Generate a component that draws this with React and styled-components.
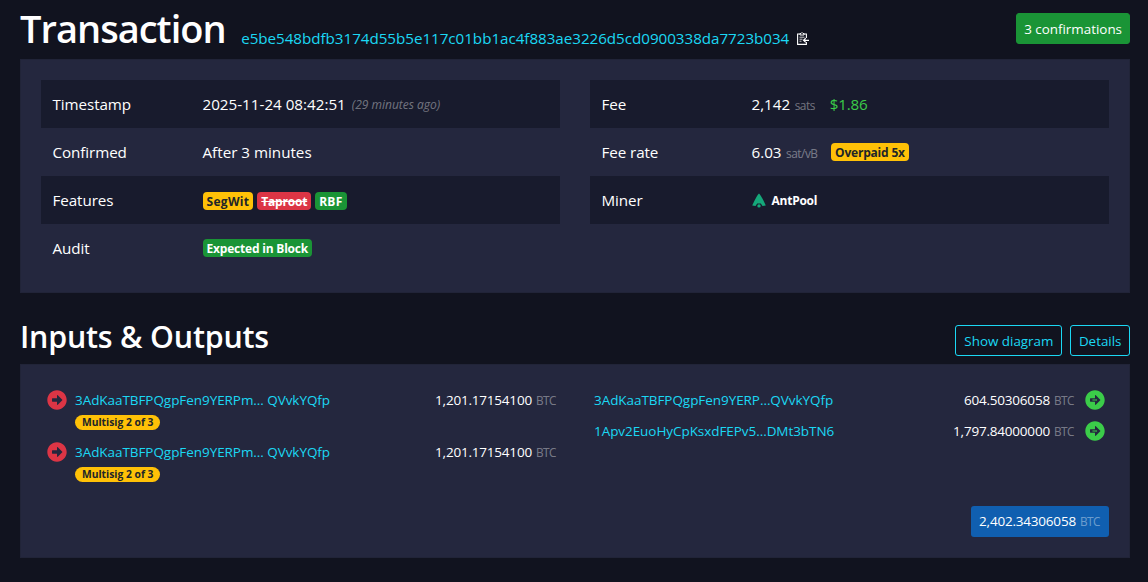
import React from "react";
import styled, { createGlobalStyle } from "styled-components";

const GlobalStyle = createGlobalStyle`
  * {
    box-sizing: border-box;
  }

  body {
    margin: 0;
    height: 582px;
    overflow: hidden;
    background: #11131f;
    color: #fff;
    font-family: "Open Sans", "Noto Sans", sans-serif;
    font-size: 15.2px;
    line-height: 24px;
  }
`;

const Page = styled.div`
  padding: 0 18px 0 20px;
  white-space: nowrap;
`;

const Header = styled.div`
  display: flex;
  align-items: flex-start;
  height: 59px;
`;

const Title = styled.h1`
  margin: 4px 0 0;
  font-size: 38px;
  font-weight: 600;
  line-height: 48px;
  letter-spacing: -0.98px;
`;

const Subtitle = styled.h2`
  margin: 25px auto 0 0;
  font-size: 30.4px;
  font-weight: 600;
  line-height: 38px;
  letter-spacing: -0.2px;
`;

const TxId = styled.a`
  margin: 26px auto 0 15.5px;
  display: flex;
  align-items: center;
  gap: 8px;
  color: #1bd8f4;
  letter-spacing: -0.035px;
`;

const Button = styled.button`
  height: 31px;
  margin: ${({ $top }) => $top}px 0 0 8px;
  padding: 1px ${({ $pad = 7.5 }) => $pad}px 0;
  border: 1px solid ${({ $border }) => $border};
  border-radius: 3px;
  background: ${({ $fill }) => $fill || "transparent"};
  color: ${({ $color }) => $color || "#fff"};
  font-family: inherit;
  font-size: 13.4px;
  line-height: 21px;
  white-space: nowrap;
`;

const Box = styled.div`
  display: flex;
  height: ${({ $height }) => $height}px;
  padding: 20px;
  border: 1px solid #212438;
  background: #24273e;
`;

const Summary = styled(Box)`
  gap: 30px;
`;

const Table = styled.div`
  flex: 1;
`;

const Row = styled.div`
  display: flex;
  align-items: center;
  height: 48px;
  padding: 0 11.5px;

  &:nth-child(odd) {
    background: #181b2d;
  }
`;

const Label = styled.div`
  width: 150px;
  letter-spacing: -0.08px;
`;

const Value = styled.div`
  display: flex;
  align-items: center;
`;

const Muted = styled.span`
  margin-left: ${({ $italic }) => ($italic ? 6 : 4.5)}px;
  padding-top: 2px;
  color: rgba(255, 255, 255, 0.4);
  font-size: ${({ $italic }) => ($italic ? 12 : 11.9)}px;
  font-style: ${({ $italic }) => ($italic ? "italic" : "normal")};
  letter-spacing: ${({ $italic }) => ($italic ? 0 : -0.5)}px;
`;

const Fiat = styled.span`
  margin-left: 15px;
  color: #3bcc49;
  letter-spacing: -0.2px;
`;

const badgeColors = {
  warning: ["#ffc107", "#212529"],
  danger: ["#dc3545", "#fff"],
  success: ["#1a9436", "#fff"],
};

const Badge = styled.span`
  height: 18px;
  margin: ${({ $top = 1 }) => $top}px 4px 0 0;
  padding: 0 4px;
  border-radius: 4px;
  background: ${({ $type }) => badgeColors[$type][0]};
  color: ${({ $type }) => badgeColors[$type][1]};
  font-size: 12px;
  font-weight: 700;
  line-height: 19px;
  letter-spacing: ${({ $spacing = -0.2 }) => $spacing}px;
  text-decoration: ${({ $struck }) => ($struck ? "line-through" : "none")};
`;

const FeeBadge = styled(Badge)`
  margin: 0 0 0 13.5px;
`;

const Miner = styled.span`
  margin-left: 6px;
  padding-top: 2px;
  font-size: 12px;
  font-weight: 700;
  letter-spacing: -0.25px;
`;

const SectionHeader = styled.div`
  display: flex;
  align-items: flex-start;
  height: 71px;
`;

const Transfers = styled(Box)`
  flex-direction: column;
  justify-content: space-between;
  font-size: 13.5px;
  line-height: 23px;
`;

const Columns = styled.div`
  display: flex;
  gap: 38px;
  padding: 4px 4px 0 6px;
`;

const InputList = styled.div`
  display: flex;
  flex-direction: column;
  gap: 9px;
  width: 509px;
`;

const OutputList = styled.div`
  display: flex;
  flex-direction: column;
  gap: 8px;
  flex: 1;
`;

const Entry = styled.div`
  display: flex;
  align-items: flex-start;
`;

const Party = styled.div`
  display: flex;
  flex-direction: column;
  align-items: flex-start;
  flex: 1;
`;

const Address = styled.a`
  height: 23px;
  color: #1bd8f4;
  letter-spacing: -0.06px;
`;

const Pill = styled.span`
  height: 15px;
  margin-top: 3px;
  margin-bottom: 2px;
  padding: 0 7px;
  border-radius: 8px;
  background: #ffc107;
  color: #212529;
  font-size: 10.3px;
  font-weight: 700;
  line-height: 15px;
`;

const Amount = styled.div`
  display: flex;
  letter-spacing: -0.2px;
`;

const Unit = styled.span`
  margin-left: 4px;
  color: rgba(255, 255, 255, 0.4);
  font-size: 11.8px;
  letter-spacing: -0.5px;
`;

const ArrowSvg = styled.svg`
  flex: none;
  width: 20px;
  height: 20px;
  margin: ${({ $margin }) => $margin};
`;

const Total = styled.div`
  display: flex;
  align-items: center;
  align-self: flex-end;
  height: 31px;
  padding: 0 9px 0 8px;
  border-radius: 3px;
  background: #105fb0;
  letter-spacing: -0.2px;
`;

const Arrow = ({ color, margin, hollow }) => (
  <ArrowSvg $margin={margin} viewBox="0 0 512 512" fill={color}>
    <path d="M256 8c137 0 248 111 248 248S393 504 256 504 8 393 8 256 119 8 256 8zM140 300h116v70.9c0 10.700 13 16.100 20.500 8.500l114.300-114.900c4.700-4.700 4.700-12.200 0-16.900l-114.300-115c-7.600-7.600-20.500-2.200-20.500 8.500V212H140c-6.600 0-12 5.400-12 12v64c0 6.600 5.400 12 12 12z" />
    {hollow && <path d="M190 246h98v-14l24 24-24 24v-14h-98z" />}
  </ArrowSvg>
);

const Clipboard = () => (
  <svg width="12" height="13" viewBox="0 0 12 13" fill="none" stroke="#fff">
    <path d="M3 2H.6v10.400h8.800V10M7 2h2.400v4" strokeWidth="1.100" />
    <path d="M3 3V1.500h1L5 .5l1 1h1V3z" />
    <path d="M2.500 5.200h5M2.500 7.200h3M2.500 9.200h2" strokeWidth=".8" />
    <path d="M12 8.300H6.500M8.700 6.200L6.500 8.300l2.200 2.100" strokeWidth="1.200" />
  </svg>
);

const AntPoolLogo = () => (
  <svg width="14" height="15" viewBox="0 0 14 15" fill="#15a87a">
    <path d="M7 .5Q9 2 13.800 12.500L10.500 13 8.800 10.500H5.200L3.500 13 .2 12.500Q5 2 7 .5z" />
    <circle cx="7" cy="12.900" r="1.700" />
  </svg>
);

const inputs = [1, 2];

const outputs = [
  {
    address: "3AdKaaTBFPQgpFen9YERP...QVvkYQfp",
    amount: "604.50306058",
  },
  {
    address: "1Apv2EuoHyCpKsxdFEPv5...DMt3bTN6",
    amount: "1,797.84000000",
  },
];

const App = () => (
  <Page>
    <GlobalStyle />
    <Header>
      <Title>Transaction</Title>
      <TxId>
        e5be548bdfb3174d55b5e117c01bb1ac4f883ae3226d5cd0900338da7723b034
        <Clipboard />
      </TxId>
      <Button $top={13} $pad={7} $fill="#1a9436" $border="#1a9436">
        3 confirmations
      </Button>
    </Header>

    <Summary $height={234}>
      <Table>
        <Row>
          <Label>Timestamp</Label>
          <Value>
            2025-11-24 08:42:51
            <Muted $italic>(29 minutes ago)</Muted>
          </Value>
        </Row>
        <Row>
          <Label>Confirmed</Label>
          <Value>After 3 minutes</Value>
        </Row>
        <Row>
          <Label>Features</Label>
          <Value>
            <Badge $type="warning" $spacing={0.3}>
              SegWit
            </Badge>
            <Badge $type="danger" $struck>
              Taproot
            </Badge>
            <Badge $type="success" $spacing={0.25}>
              RBF
            </Badge>
          </Value>
        </Row>
        <Row>
          <Label>Audit</Label>
          <Value>
            <Badge $type="success" $top={-1}>
              Expected in Block
            </Badge>
          </Value>
        </Row>
      </Table>
      <Table>
        <Row>
          <Label>Fee</Label>
          <Value>
            2,142
            <Muted>sats</Muted>
            <Fiat>$1.86</Fiat>
          </Value>
        </Row>
        <Row>
          <Label>Fee rate</Label>
          <Value>
            6.03
            <Muted>sat/vB</Muted>
            <FeeBadge $type="warning">Overpaid 5x</FeeBadge>
          </Value>
        </Row>
        <Row>
          <Label>Miner</Label>
          <Value>
            <AntPoolLogo />
            <Miner>AntPool</Miner>
          </Value>
        </Row>
      </Table>
    </Summary>

    <SectionHeader>
      <Subtitle>Inputs &amp; Outputs</Subtitle>
      <Button $top={32} $pad={8} $color="#1bd8f4" $border="#1bd8f4">
        Show diagram
      </Button>
      <Button $top={32} $color="#1bd8f4" $border="#1bd8f4">
        Details
      </Button>
    </SectionHeader>

    <Transfers $height={194}>
      <Columns>
        <InputList>
          {inputs.map((id) => (
            <Entry key={id}>
              <Arrow color="#dc3545" margin="1px 8px 0 0" />
              <Party>
                <Address>3AdKaaTBFPQgpFen9YERPm... QVvkYQfp</Address>
                <Pill>Multisig 2 of 3</Pill>
              </Party>
              <Amount>
                1,201.17154100<Unit>BTC</Unit>
              </Amount>
            </Entry>
          ))}
        </InputList>
        <OutputList>
          {outputs.map(({ address, amount }) => (
            <Entry key={address}>
              <Party>
                <Address>{address}</Address>
              </Party>
              <Amount>
                {amount}
                <Unit>BTC</Unit>
              </Amount>
              <Arrow color="#3bcc49" margin="1px 0 0 11px" hollow />
            </Entry>
          ))}
        </OutputList>
      </Columns>
      <Total>
        2,402.34306058<Unit>BTC</Unit>
      </Total>
    </Transfers>
  </Page>
);

export default App;
